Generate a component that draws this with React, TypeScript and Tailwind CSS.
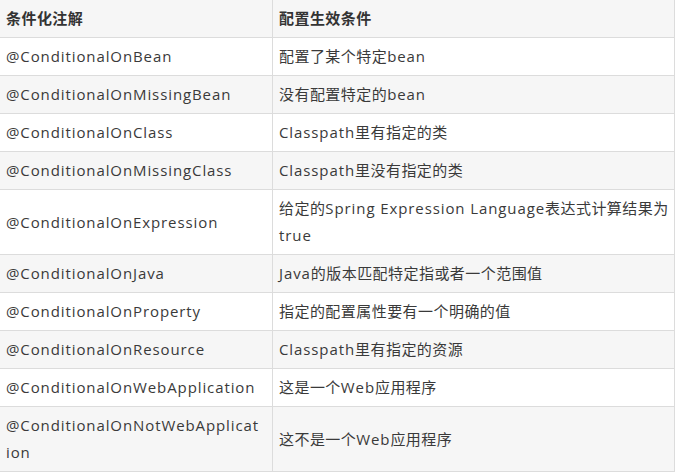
import React from 'react'

const rows: [string, string][] = [
  ['@ConditionalOnBean', '配置了某个特定bean'],
  ['@ConditionalOnMissingBean', '没有配置特定的bean'],
  ['@ConditionalOnClass', 'Classpath里有指定的类'],
  ['@ConditionalOnMissingClass', 'Classpath里没有指定的类'],
  ['@ConditionalOnExpression', '给定的Spring Expression Language表达式计算结果为true'],
  ['@ConditionalOnJava', 'Java的版本匹配特定指或者一个范围值'],
  ['@ConditionalOnProperty', '指定的配置属性要有一个明确的值'],
  ['@ConditionalOnResource', 'Classpath里有指定的资源'],
  ['@ConditionalOnWebApplication', '这是一个Web应用程序'],
  ['@ConditionalOnNotWebApplicat\nion', '这不是一个Web应用程序'],
]

// latin runs get a bit more letter spacing than the CJK ones
function Txt({ text }: { text: string }) {
  const lines = text.split('\n')
  return (
    <>
      {lines.map((line, li) => (
        <React.Fragment key={li}>
          {li > 0 && <br />}
          {line.split(/([\x00-\x7F]+)/).map((part, pi) =>
            /^[\x00-\x7F]+$/.test(part) ? (
              <span key={pi} className="tracking-[0.9px]">
                {part}
              </span>
            ) : (
              part && <span key={pi}>{part}</span>
            )
          )}
        </React.Fragment>
      ))}
    </>
  )
}

export default function App() {
  return (
    <div
      className="w-[676px] h-[473px] bg-white text-[#3a3a3a] text-[15px] leading-[27px] tracking-[0.45px]"
      style={{ fontFamily: '"Open Sans", "Noto Sans CJK SC", sans-serif' }}
    >
      <div className="w-[675px] border-r border-[#dcdcdc]">
        {/* header */}
        <div className="grid grid-cols-[273px_1fr] bg-[#f6f6f6] border-b border-[#dcdcdc] font-bold text-[#333]">
          <div className="px-[6px] py-[5px] border-r border-[#dcdcdc]">条件化注解</div>
          <div className="px-[6px] py-[5px]">配置生效条件</div>
        </div>

        {rows.map(([name, desc], i) => (
          <div
            key={name}
            className={
              'grid grid-cols-[273px_1fr] border-b border-[#dcdcdc] ' +
              (i % 2 === 1 ? 'bg-[#f6f6f6]' : 'bg-white')
            }
          >
            <div className="px-[6px] py-[5px] border-r border-[#dcdcdc] flex items-center">
              <span className="min-w-0 [overflow-wrap:anywhere]">
                <Txt text={name} />
              </span>
            </div>
            <div className="pl-[6px] pr-[1px] py-[5px] flex items-center">
              <span className="min-w-0 [overflow-wrap:anywhere]">
                <Txt text={desc} />
              </span>
            </div>
          </div>
        ))}
      </div>
    </div>
  )
}
